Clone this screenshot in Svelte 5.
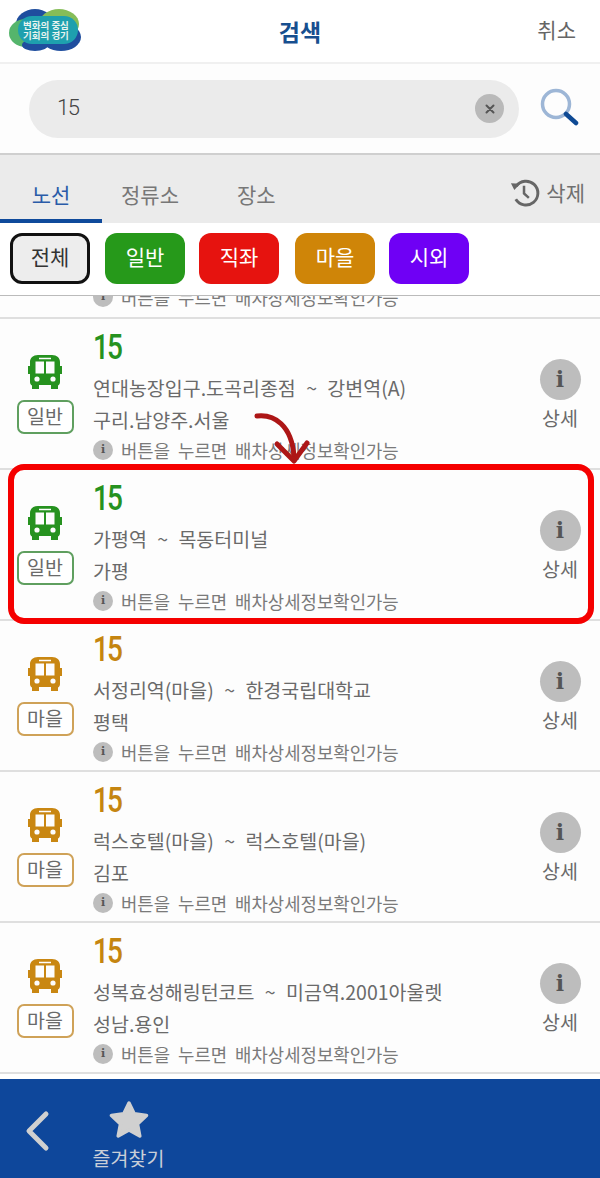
<script>
  const filters = [
    { label: '전체', cls: 'all' },
    { label: '일반', cls: 'green' },
    { label: '직좌', cls: 'red' },
    { label: '마을', cls: 'orange' },
    { label: '시외', cls: 'purple' }
  ];
  const routes = [
    { type: '일반', color: 'g', path: '', region: '', hidden: true },
    { type: '일반', color: 'g', path: '연대농장입구.도곡리종점 ~ 강변역(A)', region: '구리.남양주.서울' },
    { type: '일반', color: 'g', path: '가평역 ~ 목동터미널', region: '가평' },
    { type: '마을', color: 'o', path: '서정리역(마을) ~ 한경국립대학교', region: '평택' },
    { type: '마을', color: 'o', path: '럭스호텔(마을) ~ 럭스호텔(마을)', region: '김포' },
    { type: '마을', color: 'o', path: '성복효성해링턴코트 ~ 미금역.2001아울렛', region: '성남.용인' }
  ];
</script>

<div class="page">
  <header class="top">
    <div class="logo">
      <svg viewBox="0 0 72 42" width="72" height="42">
        <ellipse cx="26" cy="15" rx="19" ry="15" fill="#1f4e9e" />
        <ellipse cx="50" cy="15" rx="20" ry="15" fill="#86bd58" />
        <ellipse cx="17" cy="24" rx="17" ry="14" fill="#55b56c" />
        <ellipse cx="52" cy="28" rx="20" ry="14" fill="#1f4e9e" />
        <ellipse cx="26" cy="36" rx="13" ry="6" fill="#1f4e9e" />
        <rect x="9" y="7" width="60" height="28" rx="14" fill="#1ea0ae" />
      </svg>
      <div class="logo-text"><span>변화의 중심</span><span>기회의 경기</span></div>
    </div>
    <h1>검색</h1>
    <span class="cancel">취소</span>
  </header>

  <section class="search">
    <div class="input">
      <span class="q">15</span>
      <span class="clear">
        <svg viewBox="0 0 12 12" width="12" height="12"><path d="M2.500 2.500l7 7M9.500 2.500l-7 7" stroke="#555" stroke-width="2" stroke-linecap="round"/></svg>
      </span>
    </div>
    <svg class="mag" viewBox="0 0 40 40" width="40" height="40">
      <circle cx="17" cy="16" r="13.500" fill="none" stroke="#9db6d6" stroke-width="3.500"/>
      <path d="M27 26l10 9" stroke="#0f4a94" stroke-width="4.500" stroke-linecap="round"/>
    </svg>
  </section>

  <nav class="tabs">
    <span class="tab active">노선</span>
    <span class="tab t2">정류소</span>
    <span class="tab t3">장소</span>
    <span class="del">
      <svg viewBox="0 0 32 32" width="31" height="31">
        <path d="M7.500 9.500A12.300 12.300 0 1 1 7 23" fill="none" stroke="#666" stroke-width="3"/>
        <path d="M2 6.500l9.500 0.500-6 6.500z" fill="#666"/>
        <path d="M15.500 9v8l5 4.500" fill="none" stroke="#666" stroke-width="2.600"/>
      </svg>
      삭제
    </span>
  </nav>

  <div class="filters">
    {#each filters as f}
      <button class={f.cls}>{f.label}</button>
    {/each}
  </div>

  <main class="list">
    {#each routes as r, i}
      <article class="row" class:first={i === 0}>
        <div class="kind {r.color}">
          <svg viewBox="0 0 34 34" width="34" height="34">
            <path fill-rule="evenodd" d="M10 0h14c5 0 8 3 8 7v4h2v8h-2v8c0 2-1 3-2 3.500V34h-7v-4H11v4H4v-3.500C3 30 2 29 2 27v-8H0v-8h2V7c0-4 3-7 8-7zM7.500 6.500v12H16v-12zm10.500 0v12h8.500v-12zM11 2.800v1.500h12V2.800zM9 21.400a2.600 2.600 0 1 0 0 5.200 2.600 2.600 0 0 0 0-5.200zm16 0a2.600 2.600 0 1 0 0 5.200 2.600 2.600 0 0 0 0-5.200z" />
          </svg>
          <span class="tag">{r.type}</span>
        </div>
        <div class="body">
          <div class="num {r.color}">15</div>
          <div class="path">{r.path}</div>
          <div class="region">{r.region}</div>
          <div class="hint"><span class="dot">i</span>버튼을 누르면 배차상세정보확인가능</div>
        </div>
        <div class="detail">
          <span class="info">i</span>
          <span>상세</span>
        </div>
      </article>
    {/each}
  </main>

  <footer class="bottom">
    <svg class="back" viewBox="0 0 26 42" width="26" height="42">
      <path d="M22 4L5 21l17 17" fill="none" stroke="#d0d0d0" stroke-width="5" stroke-linecap="round" stroke-linejoin="round"/>
    </svg>
    <div class="fav">
      <svg viewBox="0 0 40 38" width="40" height="38">
        <path d="M20 3l5.200 10.800 12.300 1.700-9 8.500 2.300 12L20 30l-10.800 6 2.300-12-9-8.500 12.300-1.700z" fill="#d0d0d0" stroke="#d0d0d0" stroke-width="3.500" stroke-linejoin="round"/>
      </svg>
      <span>즐겨찾기</span>
    </div>
  </footer>

  <div class="highlight"></div>
  <svg class="arrow" viewBox="0 0 60 60" width="60" height="60">
    <path d="M5 5C22 3 40 14 42 46" fill="none" stroke="#ad1616" stroke-width="5" stroke-linecap="round"/>
    <path d="M25 33L42 50 55 32" fill="none" stroke="#ad1616" stroke-width="5" stroke-linecap="round" stroke-linejoin="round"/>
  </svg>
</div>

<style>
  :global(body) { margin: 0; }
  .page {
    position: relative;
    width: 600px;
    height: 1178px;
    overflow: hidden;
    background: #fff;
    font-family: "Noto Sans CJK KR", "Noto Sans", sans-serif;
    color: #666;
  }
  .top {
    height: 62px;
    display: flex;
    align-items: center;
    justify-content: center;
    position: relative;
    border-bottom: 2px solid #f0f0f0;
  }
  .logo { position: absolute; left: 9px; top: 9px; width: 72px; height: 42px; }
  .logo svg { display: block; }
  .logo-text {
    position: absolute; left: 14px; top: 11px;
    display: flex; flex-direction: column;
    font-size: 9.500px; line-height: 10px; font-weight: 700; color: #e8f4f0;
    white-space: nowrap;
  }
  h1 { margin: 0; font-size: 23px; line-height: 1; font-weight: 700; color: #174f8f; }
  .cancel { position: absolute; right: 24px; top: 15px; font-size: 21px; line-height: 28px; color: #666; }
  .search {
    height: 89px;
    display: flex;
    align-items: center;
    padding-left: 29px;
    background: #fdfdfd;
    border-bottom: 2px solid #cfcfcf;
  }
  .input {
    width: 490px; height: 58px;
    border-radius: 29px;
    background: #ebebeb;
    display: flex; align-items: center; justify-content: space-between;
    padding: 0 15px 0 28px;
    box-sizing: border-box;
  }
  .q {
    font-family: Roboto, "Noto Sans", sans-serif; font-size: 22px; font-weight: 300; color: #444;
    letter-spacing: -1.500px; margin-top: -2px;
  }
  .clear {
    width: 29px; height: 29px; border-radius: 50%;
    background: #b9b9b9;
    display: flex; align-items: center; justify-content: center;
  }
  .mag { margin-left: 20px; margin-top: -1px; }
  .tabs {
    height: 68px;
    background: #ebebeb;
    position: relative;
    display: flex;
    align-items: center;
    font-size: 21px;
    color: #777;
  }
  .tab { position: absolute; top: 24px; line-height: 30px; }
  .tab.active {
    left: 0; width: 102px; height: 44px; text-align: center;
    color: #2a5ba8; border-bottom: 4px solid #0f4a9b;
    box-sizing: content-box;
    top: 20px; line-height: 38px;
  }
  .t2 { left: 121px; }
  .t3 { left: 237px; }
  .del {
    position: absolute; right: 15px; top: 21px;
    display: flex; align-items: center; gap: 6px;
    color: #707070; line-height: 33px;
  }
  .del svg { margin-left: -3px; }
  .filters {
    height: 73px;
    box-sizing: border-box;
    padding-top: 10px;
    padding-left: 10px;
    display: flex;
    gap: 14px;
    align-items: flex-start;
    background: #fff;
    border-bottom: 1px solid #bbb;
    position: relative;
    z-index: 1;
  }
  .filters button {
    width: 80px; height: 51px;
    border: 0; border-radius: 12px;
    font: inherit; font-size: 21px; line-height: 28px; color: #fff; padding: 0 0 5px;
  }
  .filters button.all { background: #ededed; color: #333; border: 3px solid #111; }
  .filters button.green { background: #26991a; margin-left: 1px; }
  .filters button.red { background: #e6130f; }
  .filters button.orange { background: #cf8508; margin-left: 2px; }
  .filters button.purple { background: #6f00f5; }
  .list { height: 778px; overflow: hidden; }
  .row {
    height: 151px;
    box-sizing: border-box;
    display: flex;
    background: #fdfdfd;
    border-bottom: 2px solid #dfdfdf;
    position: relative;
  }
  .row.first { margin-top: -128px; }
  .row.first .kind, .row.first .num, .row.first .path, .row.first .region, .row.first .detail { visibility: hidden; }
  .kind {
    width: 90px;
    flex: none;
    display: flex; flex-direction: column; align-items: center;
    padding-top: 36px;
    box-sizing: border-box;
  }
  .kind svg { display: block; }
  .kind.g svg { fill: #26921f; }
  .kind.o svg { fill: #c98712; }
  .tag {
    margin-top: 11px;
    width: 57px; height: 34px;
    box-sizing: border-box;
    border-radius: 7px;
    border: 2px solid;
    background: #fff;
    font-size: 19.500px; line-height: 28px; text-align: center; color: #6a6a6a;
  }
  .kind.g .tag { border-color: #5f9f5f; }
  .kind.o .tag { border-color: #cfa258; }
  .body { flex: 1; padding-left: 3px; min-width: 0; }
  .num {
    font-family: Roboto, "Noto Sans", sans-serif;
    font-size: 35px; font-weight: 500; line-height: 38px; letter-spacing: -2.500px;
    margin-top: 10px;
    transform: scaleX(0.8);
    transform-origin: left center;
  }
  .num.g { color: #26921f; }
  .num.o { color: #c58510; }
  .path, .region {
    font-size: 19.500px; color: #6a6a6a; white-space: nowrap; word-spacing: 6px; min-height: 30px;
  }
  .path { line-height: 30px; margin-top: 6px; }
  .region { line-height: 32px; margin-top: 1px; word-spacing: 0; }
  .hint {
    display: flex; align-items: center;
    font-size: 17.800px; line-height: 22px; margin-top: 3px; color: #7a7a7a; white-space: nowrap; word-spacing: 4px;
  }
  .dot {
    width: 20px; height: 20px; border-radius: 50%;
    background: #bdbdbd; color: #555; margin-right: 8px;
    font-family: "DejaVu Serif", serif; font-weight: 700; font-size: 11px; line-height: 20px; text-align: center;
  }
  .detail {
    position: absolute; right: 19px; top: 40px;
    width: 42px;
    display: flex; flex-direction: column; align-items: center;
    font-size: 19.500px; line-height: 26px; color: #6a6a6a;
  }
  .info {
    width: 41px; height: 41px; border-radius: 50%;
    background: #bdbdbd; color: #555; margin-bottom: 5px;
    font-family: "DejaVu Serif", serif; font-weight: 700; font-size: 22px; line-height: 41px; text-align: center;
  }
  .bottom {
    position: absolute; left: 0; right: 0; top: 1079px; height: 99px;
    background: #0e479b;
  }
  .back { position: absolute; left: 24px; top: 31px; }
  .fav {
    position: absolute; left: 90px; top: 21px; width: 78px;
    display: flex; flex-direction: column; align-items: center;
    color: #c9cfd8; font-size: 19.500px; line-height: 26px;
  }
  .fav svg { display: block; margin-left: -1px; }
  .fav span { margin-top: 7px; margin-left: -1px; white-space: nowrap; }
  .highlight {
    position: absolute; left: 8px; top: 464px; width: 586px; height: 160px;
    box-sizing: border-box;
    border: 6px solid #f50000;
    border-radius: 16px;
    pointer-events: none;
  }
  .arrow { position: absolute; left: 252px; top: 411px; pointer-events: none; }
</style>
